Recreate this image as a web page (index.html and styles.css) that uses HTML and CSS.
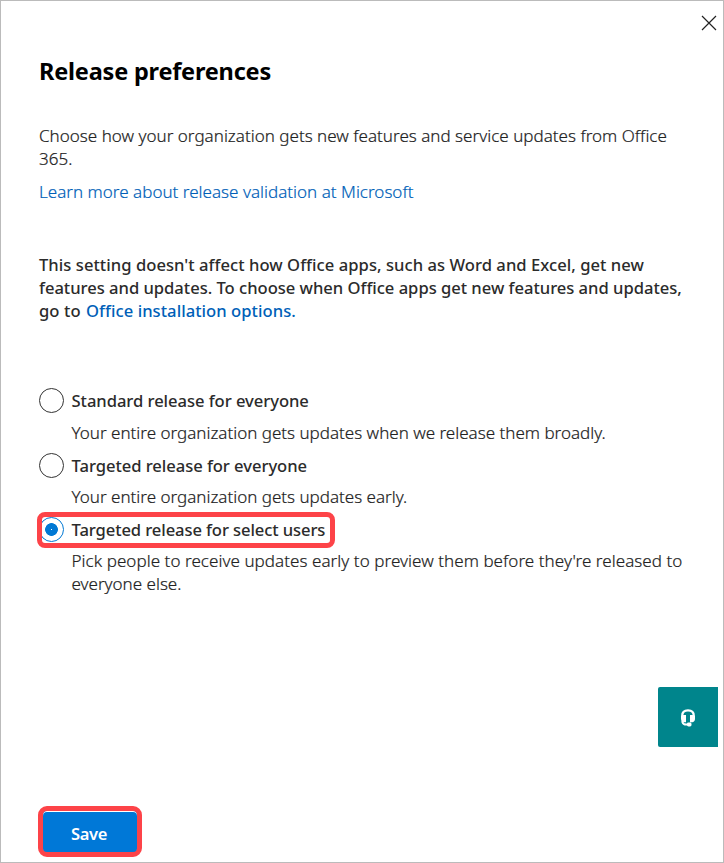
FILE: index.html
```
<!DOCTYPE html>
<html lang="en">
<head>
<meta charset="utf-8">
<title>Release preferences</title>
<link rel="stylesheet" href="styles.css">
</head>
<body>
<main class="panel">
  <button class="close" aria-label="Close">
    <svg width="16" height="16" viewBox="0 0 16 16"><path d="M1 1 15 15M15 1 1 15"/></svg>
  </button>
  <h1>Release preferences</h1>
  <p class="intro"><span class="line">Choose how your organization gets new features and service updates from Office</span> <span class="line">365.</span></p>
  <p class="more"><a href="#">Learn more about release validation at Microsoft</a></p>
  <p class="note"><span class="line first">This setting doesn't affect how Office apps, such as Word and Excel, get new</span> <span class="line">features and updates. To choose when Office apps get new features and updates,</span> <span class="line last">go to <a href="#">Office installation options.</a></span></p>
  <div class="options" role="radiogroup">
    <div class="option">
      <div class="label"><span class="radio"></span><span class="loose">Standard release for everyone</span></div>
      <p class="desc">Your entire organization gets updates when we release them broadly.</p>
    </div>
    <div class="option second">
      <div class="label"><span class="radio"></span><span class="loose">Targeted release for everyone</span></div>
      <p class="desc">Your entire organization gets updates early.</p>
    </div>
    <div class="option third">
      <div class="label highlighted"><span class="radio checked"></span><span>Targeted release for select users</span></div>
      <p class="desc"><span class="line wide">Pick people to receive updates early to preview them before they're released to</span> <span class="line">everyone else.</span></p>
    </div>
  </div>
  <div class="footer"><button class="save">Save</button></div>
  <button class="support" aria-label="Support">
    <svg width="16" height="18" viewBox="0 0 16 18">
      <path class="band" d="M2.200 9.500V6.800C2.200 3.400 4.500 1.400 8 1.400s5.800 2 5.800 5.400v2.700"/>
      <path class="cup" d="M1 7 3.300 6H6v7.200H4C2 12.800 1 11.500 1 9.700ZM15 7 12.700 6H10v7.200h2.500c1.700-.3 2.500-1.700 2.500-3.500Z"/>
      <path class="mic" d="M2.400 11.500v1.400c.5 1.800 2 2.700 4 2.700h2.500"/>
      <rect class="cup" x="7" y="13.600" width="4.500" height="3.900" rx="1.400"/>
    </svg>
  </button>
</main>
</body>
</html>
```
FILE: styles.css
```
* { box-sizing: border-box; }
body {
  margin: 0;
  background: #fff;
  color: #222;
  font: 300 17px/23px "Noto Sans", "Open Sans", sans-serif;
}
h1, p { margin: 0; }
button { padding: 0; border: 0; background: none; }
a { color: #005fb8; text-decoration: none; }
.panel {
  position: relative;
  width: 724px;
  height: 863px;
  padding: 53px 30px 0 38px;
  border: 1px solid #bbb;
}
.line { display: block; white-space: nowrap; }
.close {
  position: absolute;
  top: 14px;
  right: 6px;
  width: 16px;
  height: 16px;
}
.close svg { display: block; fill: none; stroke: #222; stroke-width: 1.2; }
h1 {
  height: 70px;
  color: #000;
  font-size: 23.500px;
  font-weight: 700;
  line-height: 34px;
  letter-spacing: -.2px;
}
.intro, .more, .desc { -webkit-text-stroke: .2px; }
.intro { letter-spacing: .016px; }
.more { margin-top: 10px; letter-spacing: .015px; }
.note {
  margin-top: 50px;
  color: #2b2b2b;
  font-size: 16.600px;
  font-weight: 500;
  letter-spacing: -.025px;
}
.note .first { letter-spacing: .04px; }
.note .last { letter-spacing: .08px; }
.note a { margin-left: 1px; letter-spacing: .04px; }
.options { margin-top: 67px; }
.label {
  display: flex;
  align-items: center;
  gap: 7.500px;
  height: 23px;
  color: #2b2b2b;
  font-size: 16.600px;
  font-weight: 500;
  letter-spacing: -.1px;
}
.loose { letter-spacing: -.05px; }
.radio {
  flex: none;
  width: 25px;
  height: 25px;
  border: 1px solid #333;
  border-radius: 50%;
}
.radio.checked {
  border-color: #0078d4;
  background: radial-gradient(circle, #fff 0 .7px, #0078d4 .8px 6px, transparent 6.700px);
}
.desc { margin: 9px 0 0 32.500px; }
.second { margin-top: 10px; }
.second .desc { margin-top: 8px; }
.third { margin-top: 10px; }
.third .desc { margin-top: 8px; }
.wide { letter-spacing: .055px; }
.highlighted { position: relative; }
.highlighted::after {
  content: "";
  position: absolute;
  left: -2px;
  top: -6px;
  width: 298px;
  height: 36px;
  border: 5px solid #fd4348;
  border-radius: 8px;
  box-sizing: border-box;
}
.footer { margin-top: 211px; margin-left: -1px; }
.save {
  width: 104px;
  height: 51px;
  padding: 3px 2px 0 0;
  border: 5px solid #fd4348;
  border-radius: 9px;
  background: #0078d7;
  box-shadow: inset 0 1px #fff;
  color: #fff;
  font: 600 16.500px/23px "Noto Sans", "Open Sans", sans-serif;
  letter-spacing: -.3px;
}
.support {
  position: absolute;
  right: 5px;
  top: 686px;
  display: grid;
  place-items: center;
  width: 60px;
  height: 60px;
  padding-top: 1px;
  border-radius: 2px 0 0 2px;
  background: #00858c;
}
.support .band, .support .mic { fill: none; stroke: #fff; stroke-width: 2.200; }
.support .mic { stroke-width: 2; }
.support .cup { fill: #fff; }
```
